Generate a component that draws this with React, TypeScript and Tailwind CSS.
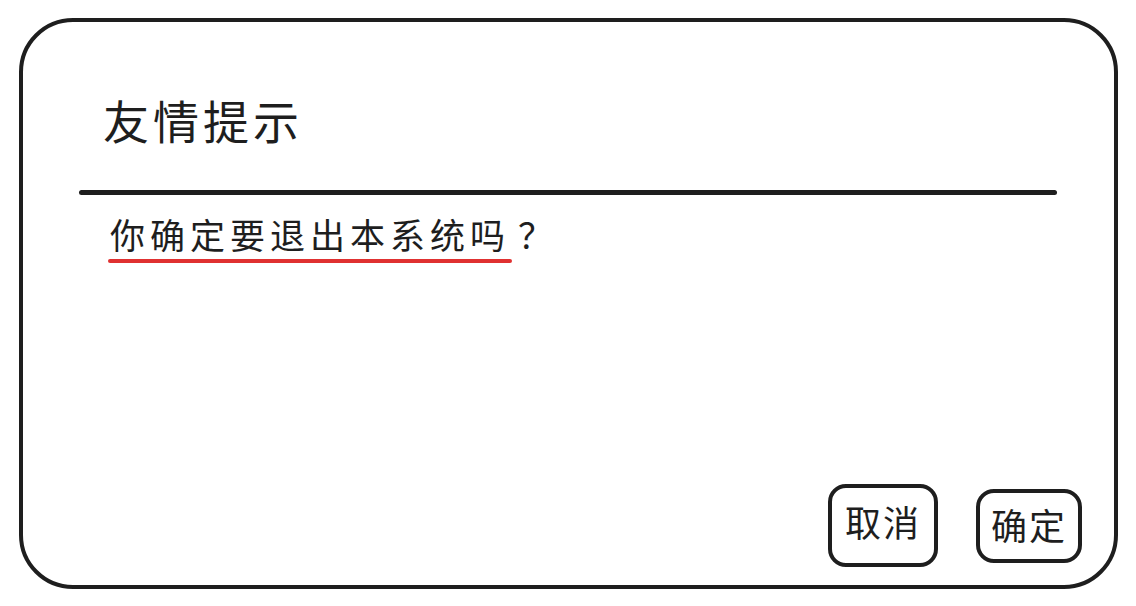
export default function App() {
  const font = { fontFamily: '"Noto Sans CJK SC", "Noto Sans", sans-serif' };
  return (
    <div className="w-[1136px] h-[606px] bg-white pt-[18px] pl-[19px] box-border" style={font}>
      <div className="w-[1099px] h-[571px] box-border border-[4px] border-[#1e1e1e] rounded-[54px] flex flex-col">
        {/* title */}
        <div className="mt-[74px] ml-[80px] text-[46px] leading-[46px] tracking-[4px] text-[#1e1e1e]">
          友情提示
        </div>

        {/* divider */}
        <div className="mt-[48px] ml-[56px] w-[978px] h-[5px] bg-[#1e1e1e] rounded-full" />

        {/* message */}
        <div className="mt-[21px] ml-[87px] flex items-start text-[35px] leading-[35px] tracking-[5px] text-[#1e1e1e]">
          <div className="flex flex-col">
            <span>你确定要退出本系统吗</span>
            <div className="mt-[8px] -ml-[2px] w-[404px] h-[4px] bg-[#e03131] rounded-full" />
          </div>
          <span className="ml-[6px]">？</span>
        </div>

        {/* actions */}
        <div className="mt-auto mb-[18px] mr-[32px] flex justify-end items-center gap-[38px]">
          <button className="w-[110px] h-[83px] box-border border-[4px] border-[#1e1e1e] rounded-[18px] pb-[10px] text-[36px] leading-none tracking-[2px] text-[#1e1e1e] flex items-center justify-center">
            取消
          </button>
          <button className="w-[106px] h-[74px] box-border border-[4px] border-[#1e1e1e] rounded-[18px] pb-[4px] text-[36px] leading-none tracking-[2px] text-[#1e1e1e] flex items-center justify-center">
            确定
          </button>
        </div>
      </div>
    </div>
  );
}
